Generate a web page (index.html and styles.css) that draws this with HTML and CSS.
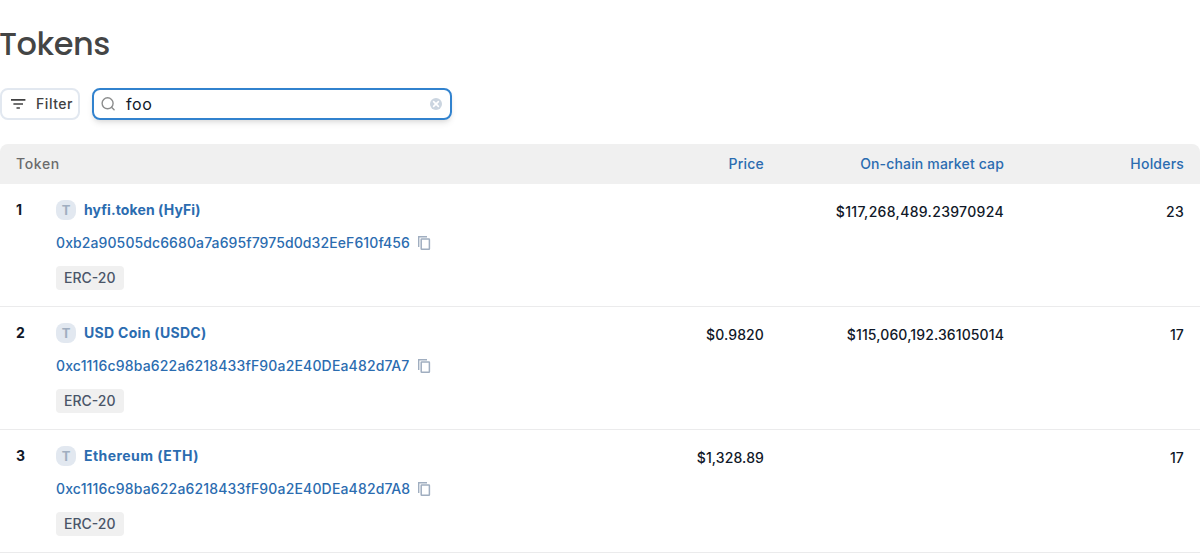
FILE: index.html
```html
<!DOCTYPE html>
<html lang="en">
<head>
<meta charset="utf-8">
<title>Tokens</title>
<link rel="stylesheet" href="styles.css">
</head>
<body>
<svg class="sprite" aria-hidden="true">
  <symbol id="copy" viewBox="0 0 20 20">
    <path d="M4.7 14V3.7H13" fill="none" stroke="currentColor" stroke-width="1.4"/>
    <rect x="7.2" y="6" width="8.2" height="10.3" rx=".5" fill="none" stroke="currentColor" stroke-width="1.5"/>
  </symbol>
</svg>
<h1 class="title">Tokens</h1>
<div class="toolbar">
  <button class="filter">
    <svg width="20" height="20" viewBox="0 0 20 20"><path d="M3 5.8h14.4M5.4 10h9.6M8.5 14h3.4" stroke="currentColor" stroke-width="1.7"/></svg>
    <span>Filter</span>
  </button>
  <div class="search">
    <svg width="16" height="16" viewBox="0 0 16 16" fill="none" stroke="#8c8d8d" stroke-width="1.4"><circle cx="7.6" cy="7.3" r="5.5"/><path d="M11.5 11.2l2.6 2.6" stroke-linecap="round"/></svg>
    <span class="query">foo</span>
    <svg width="12" height="12" viewBox="0 0 12 12"><circle cx="6" cy="6" r="6" fill="#cbd5e0"/><path d="M3.6 3.6l4.8 4.8M8.4 3.6l-4.8 4.8" stroke="#fff" stroke-width="1.6" stroke-linecap="round"/></svg>
  </div>
</div>
<div class="table">
  <div class="row head"><span class="label">Token</span><a>Price</a><a class="cap">On-chain market cap</a><a>Holders</a></div>
  <div class="row item hyfi">
    <div class="token">
      <b class="index">1</b>
      <div class="details">
        <div class="name"><span class="logo">T</span><b>hyfi.token (HyFi)</b></div>
        <div class="address"><a>0xb2a90505dc6680a7a695f7975d0d32EeF610f456</a><svg class="copy"><use href="#copy"/></svg></div>
        <span class="tag">ERC-20</span>
      </div>
    </div>
    <span class="value"></span><span class="value">$117,268,489.23970924</span><span class="value">23</span>
  </div>
  <div class="row item usdc">
    <div class="token">
      <b class="index">2</b>
      <div class="details">
        <div class="name"><span class="logo">T</span><b>USD Coin (USDC)</b></div>
        <div class="address"><a>0xc1116c98ba622a6218433fF90a2E40DEa482d7A7</a><svg class="copy"><use href="#copy"/></svg></div>
        <span class="tag">ERC-20</span>
      </div>
    </div>
    <span class="value">$0.9820</span><span class="value">$115,060,192.36105014</span><span class="value">17</span>
  </div>
  <div class="row item eth">
    <div class="token">
      <b class="index">3</b>
      <div class="details">
        <div class="name"><span class="logo">T</span><b>Ethereum (ETH)</b></div>
        <div class="address"><a>0xc1116c98ba622a6218433fF90a2E40DEa482d7A8</a><svg class="copy"><use href="#copy"/></svg></div>
        <span class="tag">ERC-20</span>
      </div>
    </div>
    <span class="value">$1,328.89</span><span class="value"></span><span class="value">17</span>
  </div>
</div>
</body>
</html>
```
FILE: styles.css
```css
* { box-sizing: border-box; }
body { margin: 0; padding-top: 24px; background: #fff; color: #101828; font: 500 14px/20px Inter, sans-serif; overflow: hidden; }
.sprite { display: none; }
svg { flex: none; }
.title { margin: 0 0 24px -1px; font: 500 32px/40px Poppins, Inter, sans-serif; letter-spacing: -.5px; color: rgba(16, 17, 18, .8); }
.toolbar { display: flex; gap: 12px; margin-bottom: 24px; }
.filter { display: flex; align-items: center; gap: 8px; width: 80px; height: 32px; padding: 0 6px; border: 2px solid #e2e8f0; border-radius: 8px; background: #fff; color: #414142; font: inherit; font-weight: 450; letter-spacing: .55px; }
.search { display: flex; align-items: center; width: 360px; height: 32px; padding: 0 8px 0 6px; border: 2px solid #3182ce; border-radius: 8px; box-shadow: 0 4px 6px -1px rgba(0, 0, 0, .1), 0 2px 4px -1px rgba(0, 0, 0, .06); }
.query { flex: 1; margin-left: 10px; font-size: 16px; font-weight: 400; letter-spacing: .6px; }
.row { display: grid; grid-template-columns: 540px 240px 240px 180px; }
.head { height: 40px; align-items: center; border-radius: 8px 8px 0 0; background: #f0f0f0; color: #6b6b6c; font-weight: 450; letter-spacing: .2px; }
.head > * { padding: 0 16px; text-align: right; }
.head > .label { text-align: left; letter-spacing: .65px; }
.head > .cap { letter-spacing: .16px; }
a, .name { color: #2b6cb0; }
.item { height: 123px; padding-top: 16px; border-bottom: 1px solid #ebebec; }
.token { display: flex; padding-left: 16px; }
.index { width: 40px; line-height: 20px; }
.index, .name b { font-weight: 700; }
.name { display: flex; align-items: center; gap: 8px; height: 20px; }
.logo { width: 20px; height: 20px; border-radius: 8px; background: #e2e8f0; color: #a0aec0; text-align: center; font-size: 13px; font-weight: 700; }
.address { display: flex; align-items: center; height: 20px; margin-top: 13px; }
.address a { width: 354px; white-space: nowrap; }
.copy { width: 20px; height: 20px; margin-left: 4px; color: #a0aec0; }
.tag { display: block; width: 68px; height: 24px; margin-top: 13px; padding: 0 8px; border-radius: 4px; background: #f0f0f0; color: #4a5568; line-height: 24px; white-space: nowrap; }
.value { padding: 2px 16px 0; text-align: right; letter-spacing: .12px; }
.hyfi .value { letter-spacing: .33px; }
.hyfi .name b { letter-spacing: .1px; }
.hyfi .address a { letter-spacing: .1px; }
.usdc .name b { letter-spacing: .3px; }
.eth .name b { letter-spacing: .45px; }
.usdc .address a, .eth .address a { letter-spacing: .165px; }
```
